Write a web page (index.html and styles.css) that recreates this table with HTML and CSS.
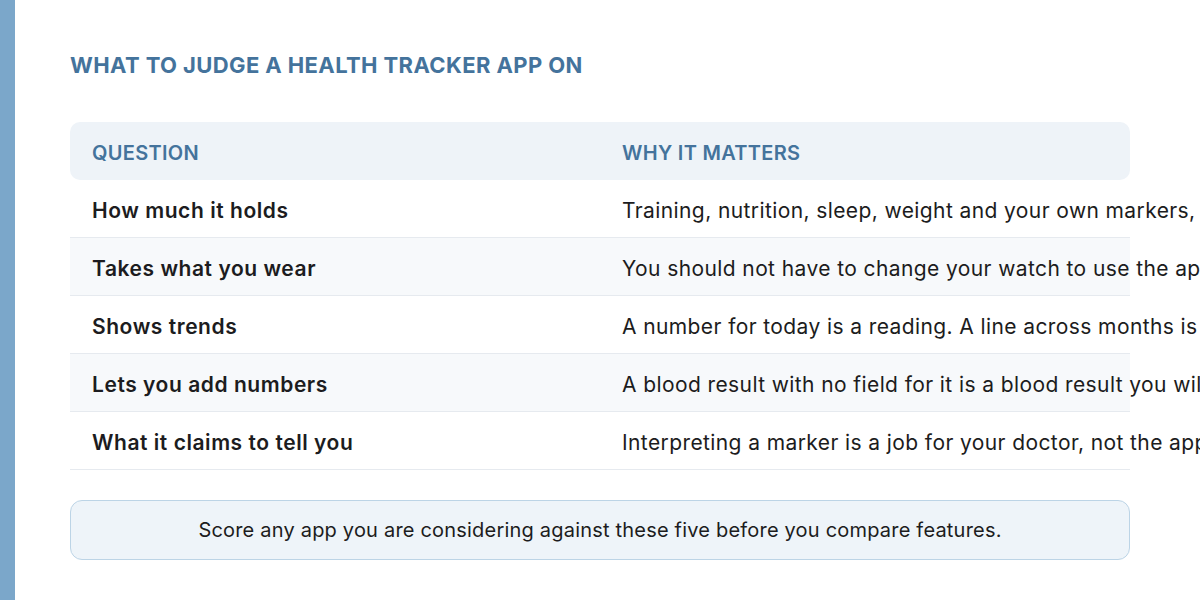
FILE: index.html
```html
<!DOCTYPE html>
<html lang="en">
<head>
<meta charset="utf-8">
<title>What to judge a health tracker app on</title>
<link rel="stylesheet" href="styles.css">
</head>
<body>
<div class="page">
  <div class="rail"></div>
  <main class="main">
    <h1 class="title">WHAT TO JUDGE A HEALTH TRACKER APP ON</h1>
    <div class="table">
      <div class="row head">
        <div class="cell">QUESTION</div>
        <div class="cell">WHY IT MATTERS</div>
      </div>
      <div class="row">
        <div class="cell q">How much it holds</div>
        <div class="cell a">Training, nutrition, sleep, weight and your own markers, all in one place.</div>
      </div>
      <div class="row alt">
        <div class="cell q">Takes what you wear</div>
        <div class="cell a">You should not have to change your watch to use the app.</div>
      </div>
      <div class="row">
        <div class="cell q">Shows trends</div>
        <div class="cell a">A number for today is a reading. A line across months is a trend.</div>
      </div>
      <div class="row alt">
        <div class="cell q">Lets you add numbers</div>
        <div class="cell a">A blood result with no field for it is a blood result you will lose.</div>
      </div>
      <div class="row">
        <div class="cell q">What it claims to tell you</div>
        <div class="cell a">Interpreting a marker is a job for your doctor, not the app.</div>
      </div>
    </div>
    <div class="note">Score any app you are considering against these five before you compare features.</div>
  </main>
</div>
</body>
</html>
```

FILE: styles.css
```css
html, body {
  margin: 0;
  padding: 0;
  background: #ffffff;
  overflow: hidden;
}
body {
  font-family: "Inter", "Noto Sans", sans-serif;
  color: #1c1c20;
}
.page {
  display: flex;
  width: 1200px;
  height: 600px;
}
.rail {
  width: 15px;
  flex: 0 0 15px;
  background: #7ba7ca;
}
.main {
  flex: 1;
  padding: 48px 70px 0 55px;
  min-width: 0;
}
.title {
  margin: 0 0 40px 0;
  font-size: 22px;
  line-height: 34px;
  font-weight: 700;
  color: #44739c;
  letter-spacing: 0.4px;
}
.table {
  width: 1060px;
}
.row {
  display: grid;
  grid-template-columns: 530px 530px;
  height: 58px;
  box-sizing: border-box;
  border-bottom: 1px solid #e6eaef;
  align-items: center;
}
.row.alt {
  background: #f7f9fb;
}
.row.head {
  background: #eef3f8;
  border-bottom: none;
  border-radius: 10px;
}
.cell {
  padding: 3px 22px 0 22px;
  white-space: nowrap;
  font-size: 21px;
  letter-spacing: 0.4px;
}
.head .cell {
  font-size: 20px;
  font-weight: 600;
  color: #44739c;
  letter-spacing: 0.3px;
}
.cell.q {
  font-weight: 600;
  letter-spacing: 0.55px;
}
.note {
  margin-top: 30px;
  height: 60px;
  box-sizing: border-box;
  border: 1px solid #bcd4e6;
  border-radius: 12px;
  background: #eef4f9;
  display: flex;
  align-items: center;
  justify-content: center;
  font-size: 20px;
  letter-spacing: 0.2px;
}
```
